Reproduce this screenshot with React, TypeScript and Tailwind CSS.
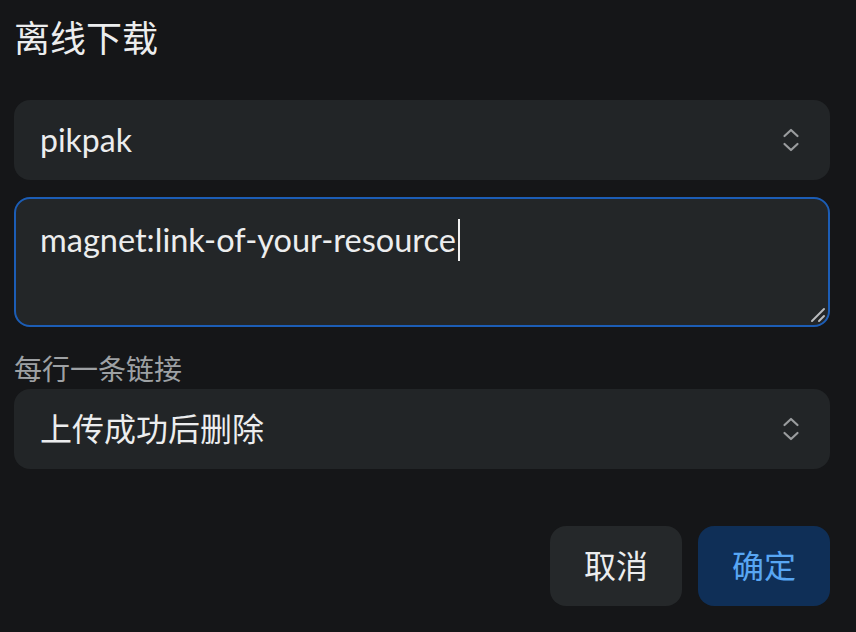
import React from "react";

function Chevrons() {
  return (
    <svg width="18" height="26" viewBox="0 0 18 26" fill="none" stroke="#9a9c9e" strokeWidth="2.2" strokeLinecap="round" strokeLinejoin="round">
      <path d="M2.5 9 L9 3 L15.5 9" />
      <path d="M2.5 17 L9 23 L15.5 17" />
    </svg>
  );
}

const font = { fontFamily: 'Lato, "Noto Sans CJK SC", sans-serif' };

export default function App() {
  return (
    <div className="w-[856px] h-[632px] bg-[#151618] pl-[14px] pr-[26px] pt-[14px] text-[#ecedee] overflow-hidden" style={font}>
      <h1 className="text-[36px] leading-[48px] font-normal mb-[38px]">离线下载</h1>
      <div className="h-[80px] rounded-[16px] bg-[#222527] flex items-center justify-between pl-[26px] pr-[30px]">
        <span className="text-[32px]">pikpak</span>
        <Chevrons />
      </div>
      <div className="relative mt-[17px] h-[130px] rounded-[16px] border-2 border-[#1c5db5] bg-[#232628] pl-[24px] pt-[17px]">
        <div className="text-[32.5px] leading-[48px] flex items-center">
          <span>magnet:link-of-your-resource</span>
          <span className="inline-block w-[2px] h-[42px] bg-[#f0f0f0] ml-[2px]" />
        </div>
        <svg className="absolute right-[2px] bottom-[2px]" width="16" height="16" viewBox="0 0 16 16" stroke="#b9bbbd" strokeWidth="2" strokeLinecap="round">
          <path d="M2 14 L14 2" />
          <path d="M9 14 L14 9" />
        </svg>
      </div>
      <div className="mt-[24px] text-[28px] leading-[36px] text-[#9ea1a4]">每行一条链接</div>
      <div className="mt-[2px] h-[80px] rounded-[16px] bg-[#222527] flex items-center justify-between pl-[26px] pr-[30px]">
        <span className="text-[32px]">上传成功后删除</span>
        <Chevrons />
      </div>
      <div className="mt-[57px] flex justify-end gap-[16px]">
        <button className="w-[132px] h-[80px] rounded-[16px] bg-[#25282a] text-[32px] text-[#ecedee]">取消</button>
        <button className="w-[132px] h-[80px] rounded-[16px] bg-[#0f2f57] text-[32px] text-[#58a6f3]">确定</button>
      </div>
    </div>
  );
}
